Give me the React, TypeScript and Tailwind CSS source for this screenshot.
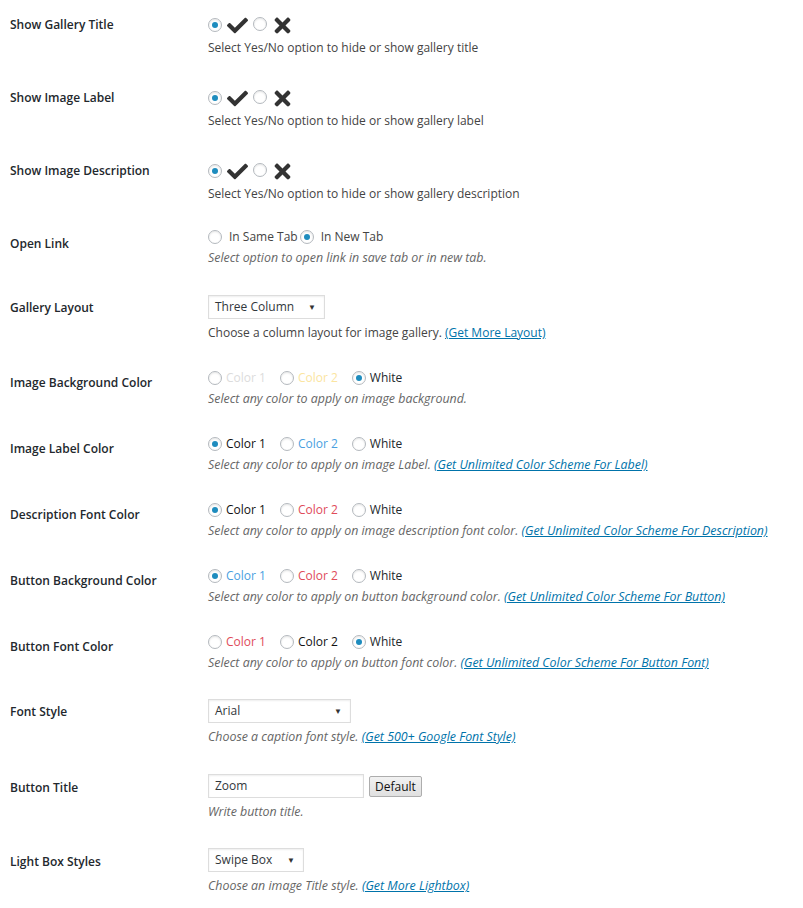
import { FaCheck, FaTimes } from "react-icons/fa";

type Opt = { label: string; color: string; checked?: boolean };

const font = { fontFamily: "'Open Sans', 'Noto Sans', sans-serif" };

function Radio({ checked }: { checked?: boolean }) {
  return (
    <span className="inline-flex h-[14px] w-[14px] shrink-0 items-center justify-center rounded-full border border-[#b4b9be] bg-white shadow-[inset_0_1px_2px_rgba(0,0,0,0.1)]">
      {checked && <span className="h-[6px] w-[6px] rounded-full bg-[#1e8cbe]" />}
    </span>
  );
}

function Select({ value, width }: { value: string; width: string }) {
  return (
    <div
      className={`flex h-[24px] items-center justify-between border border-[#ddd] bg-white pl-[6px] pr-[8px] text-[12px] text-[#32373c] shadow-[inset_0_1px_2px_rgba(0,0,0,0.07)] ${width}`}
    >
      <span>{value}</span>
      <span className="text-[8px] text-[#333]">▼</span>
    </div>
  );
}

function Link({ children }: { children: React.ReactNode }) {
  return <a className="text-[#0073aa] underline">{children}</a>;
}

function YesNo() {
  return (
    <div className="flex h-[26px] items-center">
      <Radio checked />
      <FaCheck className="ml-[5px] text-[21px] text-[#333]" />
      <span className="ml-[5px]">
        <Radio />
      </span>
      <FaTimes className="ml-[4px] text-[23px] text-[#333]" />
    </div>
  );
}

function ColorRadios({ opts }: { opts: Opt[] }) {
  return (
    <div className="flex h-[22px] items-center gap-[14px] text-[12px]">
      {opts.map((o) => (
        <span key={o.label} className="flex items-center gap-[4px]">
          <Radio checked={o.checked} />
          <span className={o.color}>{o.label}</span>
        </span>
      ))}
    </div>
  );
}

function Row({
  label,
  pt,
  lpt,
  children,
}: {
  label: string;
  pt: string;
  lpt: string;
  children: React.ReactNode;
}) {
  return (
    <div className={`flex ${pt}`}>
      <div className={`w-[208px] shrink-0 pl-[10px] text-[12px] leading-[20px] font-semibold text-[#23282d] ${lpt}`}>
        {label}
      </div>
      <div className="flex flex-col">{children}</div>
    </div>
  );
}

const desc = "text-[12.4px] leading-[20px] italic text-[#666]";
const plain = "text-[12px] leading-[20px] text-[#444]";

export default function App() {
  return (
    <div className="min-h-[908px] w-[803px] bg-white pt-[1px] text-[#444]" style={font}>
      <Row label="Show Gallery Title" pt="pt-[11px]" lpt="pt-[3px]">
        <YesNo />
        <p className={plain}>Select Yes/No option to hide or show gallery title</p>
      </Row>
      <Row label="Show Image Label" pt="pt-[27px]" lpt="pt-[3px]">
        <YesNo />
        <p className={plain}>Select Yes/No option to hide or show gallery label</p>
      </Row>
      <Row label="Show Image Description" pt="pt-[27px]" lpt="pt-[3px]">
        <YesNo />
        <p className={plain}>Select Yes/No option to hide or show gallery description</p>
      </Row>
      <Row label="Open Link" pt="pt-[22px]" lpt="pt-[8px]">
        <div className="flex h-[22px] items-center text-[12px]">
          <Radio />
          <span className="ml-[7px] mr-[2px]">In Same Tab</span>
          <Radio checked />
          <span className="ml-[7px]">In New Tab</span>
        </div>
        <p className={desc}>Select option to open link in save tab or in new tab.</p>
      </Row>
      <Row label="Gallery Layout" pt="pt-[27px]" lpt="pt-[3px]">
        <Select value="Three Column" width="w-[117px]" />
        <p className={`${plain} mt-[4px]`}>
          Choose a column layout for image gallery. <Link>(Get More Layout)</Link>
        </p>
      </Row>
      <Row label="Image Background Color" pt="pt-[24px]" lpt="pt-[6px]">
        <ColorRadios
          opts={[
            { label: "Color 1", color: "text-[#dcdcdc]" },
            { label: "Color 2", color: "text-[#fbe5a0]" },
            { label: "White", color: "text-[#23282d]", checked: true },
          ]}
        />
        <p className={desc}>Select any color to apply on image background.</p>
      </Row>
      <Row label="Image Label Color" pt="pt-[24px]" lpt="pt-[6px]">
        <ColorRadios
          opts={[
            { label: "Color 1", color: "text-[#111]", checked: true },
            { label: "Color 2", color: "text-[#4a9fdf]" },
            { label: "White", color: "text-[#23282d]" },
          ]}
        />
        <p className={desc}>
          Select any color to apply on image Label. <Link>(Get Unlimited Color Scheme For Label)</Link>
        </p>
      </Row>
      <Row label="Description Font Color" pt="pt-[24px]" lpt="pt-[6px]">
        <ColorRadios
          opts={[
            { label: "Color 1", color: "text-[#111]", checked: true },
            { label: "Color 2", color: "text-[#e04b5a]" },
            { label: "White", color: "text-[#23282d]" },
          ]}
        />
        <p className={desc}>
          Select any color to apply on image description font color.{" "}
          <Link>(Get Unlimited Color Scheme For Description)</Link>
        </p>
      </Row>
      <Row label="Button Background Color" pt="pt-[24px]" lpt="pt-[6px]">
        <ColorRadios
          opts={[
            { label: "Color 1", color: "text-[#4a9fdf]", checked: true },
            { label: "Color 2", color: "text-[#e04b5a]" },
            { label: "White", color: "text-[#23282d]" },
          ]}
        />
        <p className={desc}>
          Select any color to apply on button background color.{" "}
          <Link>(Get Unlimited Color Scheme For Button)</Link>
        </p>
      </Row>
      <Row label="Button Font Color" pt="pt-[24px]" lpt="pt-[6px]">
        <ColorRadios
          opts={[
            { label: "Color 1", color: "text-[#e04b5a]" },
            { label: "Color 2", color: "text-[#111]" },
            { label: "White", color: "text-[#23282d]", checked: true },
          ]}
        />
        <p className={desc}>
          Select any color to apply on button font color.{" "}
          <Link>(Get Unlimited Color Scheme For Button Font)</Link>
        </p>
      </Row>
      <Row label="Font Style" pt="pt-[26px]" lpt="pt-[3px]">
        <Select value="Arial" width="w-[143px]" />
        <p className={`${desc} mt-[4px]`}>
          Choose a caption font style. <Link>(Get 500+ Google Font Style)</Link>
        </p>
      </Row>
      <Row label="Button Title" pt="pt-[27px]" lpt="pt-[4px]">
        <div className="flex h-[24px] items-center">
          <div className="flex h-[24px] w-[156px] items-center border border-[#ddd] bg-white px-[6px] text-[12px] text-[#32373c] shadow-[inset_0_1px_2px_rgba(0,0,0,0.07)]">
            Zoom
          </div>
          <button className="ml-[5px] h-[21px] w-[53px] rounded-[2px] border border-[#adadad] bg-gradient-to-b from-[#f2f2f2] to-[#e0e0e0] text-[12px] leading-[19px] text-[#111]">
            Default
          </button>
        </div>
        <p className={`${desc} mt-[4px]`}>Write button title.</p>
      </Row>
      <Row label="Light Box Styles" pt="pt-[26px]" lpt="pt-[4px]">
        <Select value="Swipe Box" width="w-[96px]" />
        <p className={`${desc} mt-[4px]`}>
          Choose an image Title style. <Link>(Get More Lightbox)</Link>
        </p>
      </Row>
    </div>
  );
}
